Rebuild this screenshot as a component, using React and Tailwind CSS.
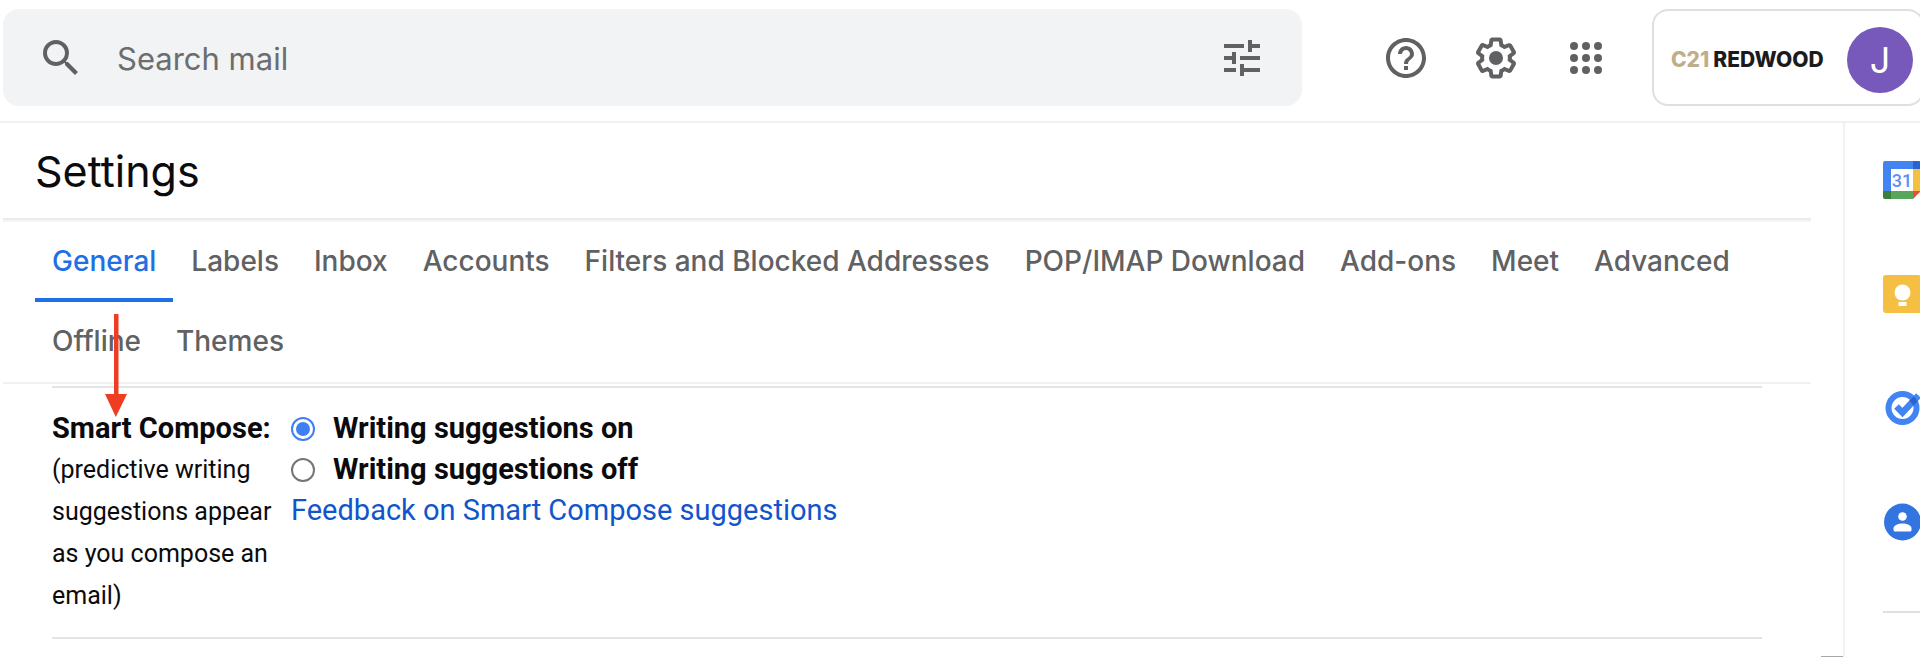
import React, { useState } from 'react';
import { MdSearch, MdTune, MdHelpOutline } from 'react-icons/md';

const TABS = [
  'General',
  'Labels',
  'Inbox',
  'Accounts',
  'Filters and Blocked Addresses',
  'POP/IMAP Download',
  'Add-ons',
  'Meet',
  'Advanced',
  'Offline',
  'Themes',
];

const GearIcon = () => (
  <svg viewBox="0 0 24 24" className="w-12 h-12" fill="currentColor" aria-hidden="true">
    <path d="M13.85 22.25h-3.7c-.74 0-1.36-.54-1.45-1.27l-.27-1.89c-.27-.14-.53-.29-.79-.46l-1.8.72c-.7.26-1.47-.03-1.81-.65L2.2 15.53c-.35-.66-.2-1.44.36-1.88l1.53-1.19c-.01-.15-.02-.3-.02-.46 0-.15.01-.31.02-.46l-1.52-1.19c-.59-.45-.74-1.26-.37-1.88l1.85-3.19c.34-.62 1.11-.9 1.79-.63l1.81.73c.26-.17.52-.32.78-.46l.27-1.91c.09-.7.71-1.25 1.44-1.25h3.7c.74 0 1.36.54 1.45 1.27l.27 1.89c.27.14.53.29.79.46l1.8-.72c.71-.26 1.48.03 1.82.65l1.84 3.18c.36.66.2 1.44-.36 1.88l-1.52 1.19c.01.15.02.3.02.46s-.01.31-.02.46l1.52 1.19c.56.45.72 1.23.37 1.86l-1.86 3.22c-.34.62-1.11.9-1.8.63l-1.8-.72c-.26.17-.52.32-.78.46l-.27 1.91c-.1.68-.72 1.22-1.46 1.22zm-3.23-2h2.76l.37-2.55.53-.22c.44-.18.88-.44 1.34-.78l.45-.34 2.38.96 1.38-2.4-2.03-1.58.07-.56c.03-.26.06-.51.06-.78s-.03-.53-.06-.78l-.07-.56 2.03-1.58-1.39-2.4-2.39.96-.45-.35c-.42-.32-.87-.58-1.33-.77l-.52-.22-.37-2.55h-2.76l-.37 2.55-.53.21c-.44.19-.88.44-1.34.79l-.45.33-2.38-.95-1.39 2.39 2.03 1.58-.07.56a7 7 0 0 0-.06.79c0 .26.02.53.06.78l.07.56-2.03 1.58 1.38 2.4 2.39-.96.45.35c.43.33.86.58 1.33.77l.53.22.38 2.55z" />
    <circle cx="12" cy="12" r="3.5" />
  </svg>
);

const AppsIcon = () => (
  <svg viewBox="0 0 24 24" className="w-12 h-12" fill="currentColor" aria-hidden="true">
    {[6, 12, 18].map((cy) =>
      [6, 12, 18].map((cx) => <circle key={`${cx}-${cy}`} cx={cx} cy={cy} r="2" />)
    )}
  </svg>
);

const CalendarLogo = () => (
  <svg viewBox="0 0 38 38" className="w-[38px] h-[38px]" aria-hidden="true">
    <path d="M2 0h28v8H8v22H0V2a2 2 0 0 1 2-2z" fill="#4384f3" />
    <path d="M30 0h6a2 2 0 0 1 2 2v6h-8z" fill="#2a63cf" />
    <path d="M30 8h8v22h-8z" fill="#f5bf42" />
    <path d="M8 30h22v8H8z" fill="#58a55c" />
    <path d="M0 30h8v8H2a2 2 0 0 1-2-2z" fill="#3a7f3e" />
    <path d="M30 30h8l-8 8z" fill="#ea4f37" />
    <path d="M8 8h22v22H8z" fill="#fff" />
    <text x="19" y="26" textAnchor="middle" fontFamily="Roboto, sans-serif" fontSize="18" fontWeight="500" fill="#5b8ff5">
      31
    </text>
  </svg>
);

const KeepLogo = () => (
  <svg viewBox="0 0 38 38" className="w-[38px] h-[38px]" aria-hidden="true">
    <rect width="38" height="38" rx="3" fill="#f4bf42" />
    <circle cx="19.5" cy="17.5" r="8" fill="#fff" />
    <path d="M15.5 22h8v2.5h-8zM15.5 27h8v4h-8z" fill="#fff" />
  </svg>
);

const TasksLogo = () => (
  <svg viewBox="0 0 38 38" className="w-[38px] h-[38px]" aria-hidden="true">
    <circle cx="19.5" cy="19" r="14" fill="none" stroke="#4384f3" strokeWidth="6" />
    <path d="M13.5 17.5l6 6L35.5 6.5" fill="none" stroke="#4384f3" strokeWidth="6.5" />
    <path d="M26.5 11.5l4-4a16 16 0 0 1 4 5l-4 4z" fill="#2a63cf" />
  </svg>
);

const ContactsLogo = () => (
  <svg viewBox="0 0 38 38" className="w-[38px] h-[38px]" aria-hidden="true">
    <circle cx="19.5" cy="19" r="18.5" fill="#3375e0" />
    <circle cx="19.5" cy="13.5" r="4.3" fill="#fff" />
    <path d="M10.5 25.5c0-3.5 5-5 9-5s9 1.5 9 5v1.5a1.5 1.5 0 0 1-1.5 1.5H12a1.5 1.5 0 0 1-1.5-1.5z" fill="#fff" />
  </svg>
);

const ADDONS = [
  { name: 'Calendar', Logo: CalendarLogo },
  { name: 'Keep', Logo: KeepLogo },
  { name: 'Tasks', Logo: TasksLogo },
  { name: 'Contacts', Logo: ContactsLogo },
];

const Header = () => (
  <header className="flex items-start h-[123px] pt-[9px] pl-[3px] border-b-2 border-[#f1f1f1] text-[#5f6163]">
    <form
      className="flex flex-1 items-center h-[97px] pl-[34px] pr-9 rounded-2xl bg-[#f1f3f4]"
      onSubmit={(e) => e.preventDefault()}
    >
      <button type="submit" aria-label="Search">
        <MdSearch className="w-12 h-12" />
      </button>
      <input
        type="text"
        aria-label="Search mail"
        placeholder="Search mail"
        className="flex-1 min-w-0 ml-8 mt-1 font-['Inter',sans-serif] text-[31px] outline-none placeholder:text-[#6b6d6f]"
      />
      <button type="button" aria-label="Show search options">
        <MdTune className="w-12 h-12" />
      </button>
    </form>

    <div className="flex shrink-0 items-center gap-[42px] h-[97px] ml-20 mr-[42px]">
      <button type="button" aria-label="Support">
        <MdHelpOutline className="w-12 h-12" />
      </button>
      <button type="button" aria-label="Settings">
        <GearIcon />
      </button>
      <button type="button" aria-label="Google apps">
        <AppsIcon />
      </button>
    </div>

    <div className="flex shrink-0 items-center justify-between w-[272px] h-[97px] -mr-1 pt-1 pl-[17px] pr-[9px] border-2 border-[#dedfe0] rounded-2xl">
      <span className="font-['Inter',sans-serif] text-[21px] font-extrabold text-[#1b1b1d]">
        <span className="mr-1 text-[#bfae8a]">C21</span>
        REDWOOD
      </span>
      <button
        type="button"
        aria-label="Account"
        className="flex items-center justify-center w-[66px] h-[66px] rounded-full bg-[#7759bb] font-['Inter',sans-serif] text-4xl text-white"
      >
        J
      </button>
    </div>
  </header>
);

const TabBar = ({ active, onSelect }) => (
  <nav className="flex flex-wrap gap-x-px px-8 border-b-2 border-[#f1f1f1]">
    {TABS.map((tab) => (
      <button
        key={tab}
        type="button"
        onClick={() => onSelect(tab)}
        className={
          tab === active
            ? "h-20 pt-0.5 px-[17px] border-b-4 border-[#1f6fe5] font-['Inter',sans-serif] text-[28px] font-medium text-[#1f6fe5]"
            : "h-20 pt-0.5 px-[17px] border-b-4 border-transparent font-['Inter',sans-serif] text-[28px] font-medium text-[#5f6163]"
        }
      >
        {tab}
      </button>
    ))}
  </nav>
);

const SmartCompose = () => {
  const [suggestions, setSuggestions] = useState('on');

  return (
    <section className="flex mx-[49px] mt-0.5 py-5 border-t-2 border-b-2 border-[#e3e4e5] text-[29px] leading-[41px] text-[#0b0b0d]">
      <div className="w-[239px] shrink-0">
        <h2 className="font-bold">Smart Compose:</h2>
        <p className="text-[25px] leading-[42px]">
          (predictive writing suggestions appear as you compose an email)
        </p>
      </div>
      <div>
        {['on', 'off'].map((value) => (
          <label key={value} className="flex items-center gap-[18px] font-bold">
            <input
              type="radio"
              name="smart-compose"
              value={value}
              checked={suggestions === value}
              onChange={() => setSuggestions(value)}
              className="appearance-none w-6 h-6 p-[3px] rounded-full border-2 border-[#757575] bg-clip-content checked:border-[#3f80f0] checked:bg-[#3f80f0]"
            />
            Writing suggestions {value}
          </label>
        ))}
        <a href="#feedback" className="text-[#1155cc]">
          Feedback on Smart Compose suggestions
        </a>
      </div>
    </section>
  );
};

const SidePanel = () => (
  <aside className="flex flex-col shrink-0 w-[77px] pl-[38px] pt-[38px] border-l-2 border-[#f1f1f1]">
    <div className="flex flex-col gap-[76px]">
      {ADDONS.map(({ name, Logo }) => (
        <button key={name} type="button" aria-label={name} className="w-[38px] h-[38px]">
          <Logo />
        </button>
      ))}
    </div>
    <hr className="mt-[70px] border-t-2 border-[#dedfe0]" />
  </aside>
);

// Red pointer drawn over the tabs, down to the Smart Compose row
const Arrow = () => (
  <svg
    viewBox="0 0 22 104"
    className="absolute left-[105px] top-[191px] w-[22px] h-[104px] pointer-events-none"
    fill="#ee3d20"
    aria-hidden="true"
  >
    <path d="M9 0h4.5v80H22L10.8 103 0 80h9z" />
  </svg>
);

export default function App() {
  const [tab, setTab] = useState('General');

  return (
    <div className="flex flex-col min-h-screen overflow-hidden bg-white font-['Roboto',sans-serif]">
      <Header />
      <div className="flex flex-1">
        <main className="relative flex flex-col flex-1 min-w-0 pl-[3px]">
          <div className="mr-8">
            <h1 className="h-[95px] pt-[18px] pl-8 font-['Inter',sans-serif] text-[43px] leading-[60px] text-[#0b0b0d]">
              Settings
            </h1>
            <div className="h-1 border-t-2 border-[#ececec] bg-[#f5f5f5]" />
            <TabBar active={tab} onSelect={setTab} />
            <SmartCompose />
          </div>
          <Arrow />
          <div className="self-end w-[22px] h-px mt-auto bg-[#a8a8a8]" />
        </main>
        <SidePanel />
      </div>
    </div>
  );
}
